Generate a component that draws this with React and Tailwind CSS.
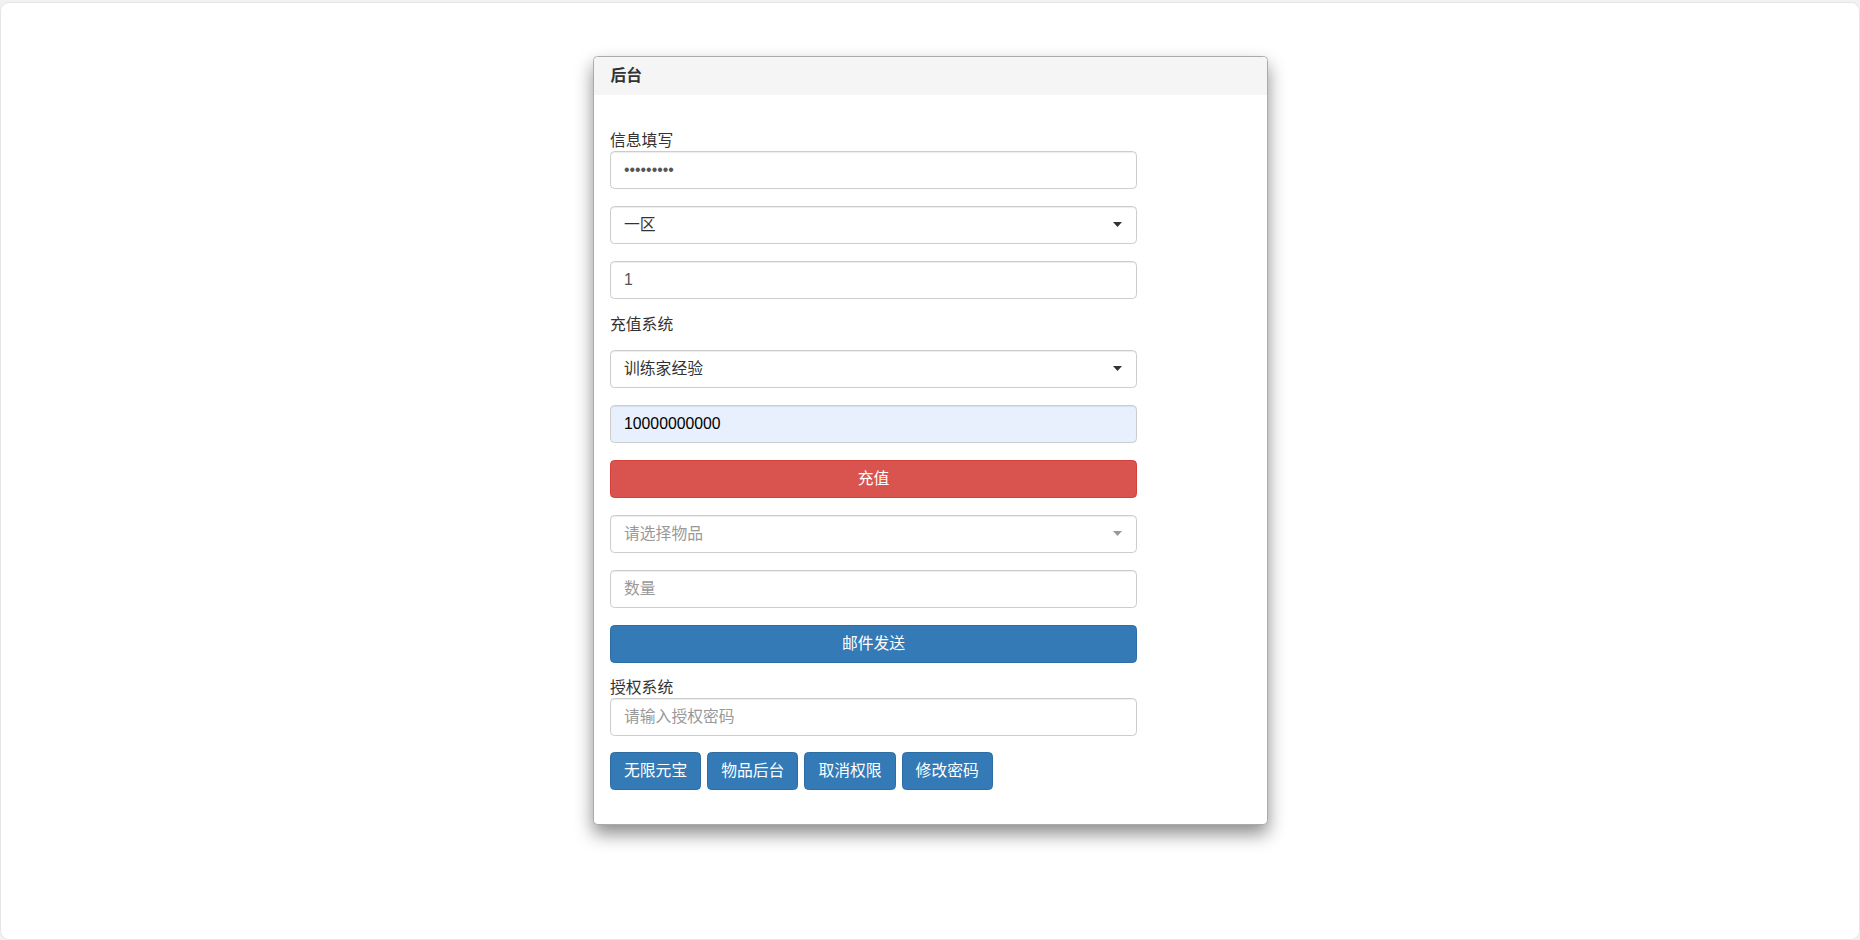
import React, { useState } from 'react';

const font = { fontFamily: '"Liberation Sans", "Noto Sans CJK SC", sans-serif' };

function Caret({ dim }) {
  return (
    <svg width="9" height="5" viewBox="0 0 9 5" className={dim ? 'fill-[#999]' : 'fill-[#333]'}>
      <path d="M0 0h9L4.5 5z" />
    </svg>
  );
}

function Select({ value, placeholder, className = '' }) {
  return (
    <div className={`h-[37.5px] w-[527px] flex items-center justify-between pl-[13px] pr-[14px] border border-[#ccc] rounded-[4.4px] bg-white shadow-[inset_0_1px_1px_rgba(0,0,0,0.075)] ${className}`}>
      <span className={value ? 'text-[#333]' : 'text-[#999]'}>{value || placeholder}</span>
      <Caret dim={!value} />
    </div>
  );
}

function Input({ value, placeholder, type = 'text', className = '', bg = 'bg-white', color = 'text-[#555]' }) {
  const [v, setV] = useState(value || '');
  return (
    <input
      type={type}
      value={v}
      placeholder={placeholder}
      onChange={(e) => setV(e.target.value)}
      className={`block h-[37.5px] w-[527px] px-[13px] border border-[#ccc] rounded-[4.4px] ${bg} ${color} placeholder:text-[#999] outline-none shadow-[inset_0_1px_1px_rgba(0,0,0,0.075)] ${className}`}
    />
  );
}

export default function App() {
  return (
    <div className="h-[940px] bg-[#f1f1f1] pt-[2px] text-[15.8px] leading-[22px]" style={font}>
      <div className="h-full bg-white border border-[#e6e6e6] rounded-[9px] flex justify-center">
        <div className="mt-[53px] self-start w-[675px] bg-white border border-[#aaa] rounded-[4.4px] shadow-[0_9px_18px_rgba(0,0,0,0.45)]">
          {/* heading */}
          <div className="h-[38px] flex items-center px-[17px] bg-[#f5f5f5] rounded-t-[4px] text-[#333] font-semibold">
            后台
          </div>

          {/* body */}
          <div className="px-[16.5px] pt-[35px] pb-[34px]">
            <div className="text-[#333] h-[21px] leading-[21px]">信息填写</div>
            <Input type="password" value="123456789" color="text-[#555]" />
            <Select value="一区" className="mt-[17.5px]" />
            <Input value="1" className="mt-[17.5px]" />

            <div className="text-[#333] mt-[15px] h-[22px]">充值系统</div>
            <Select value="训练家经验" className="mt-[14.5px]" />
            <Input value="10000000000" bg="bg-[#e8f0fe]" color="text-black" className="mt-[17.5px]" />
            <button className="block mt-[17.5px] h-[37.5px] w-[527px] rounded-[4.4px] bg-[#d9534f] border border-[#d43f3a] text-white">
              充值
            </button>
            <Select placeholder="请选择物品" className="mt-[17.5px]" />
            <Input placeholder="数量" className="mt-[17.5px]" />
            <button className="block mt-[17.5px] h-[37.5px] w-[527px] rounded-[4.4px] bg-[#337ab7] border border-[#2e6da4] text-white">
              邮件发送
            </button>

            <div className="text-[#333] mt-[14.5px] h-[21px] leading-[21px]">授权系统</div>
            <Input placeholder="请输入授权密码" />

            <div className="flex gap-[6px] mt-[16.5px]">
              {['无限元宝', '物品后台', '取消权限', '修改密码'].map((t) => (
                <button key={t} className="h-[37.5px] px-[13px] rounded-[4.4px] bg-[#337ab7] border border-[#2e6da4] text-white">
                  {t}
                </button>
              ))}
            </div>
          </div>
        </div>
      </div>
    </div>
  );
}
